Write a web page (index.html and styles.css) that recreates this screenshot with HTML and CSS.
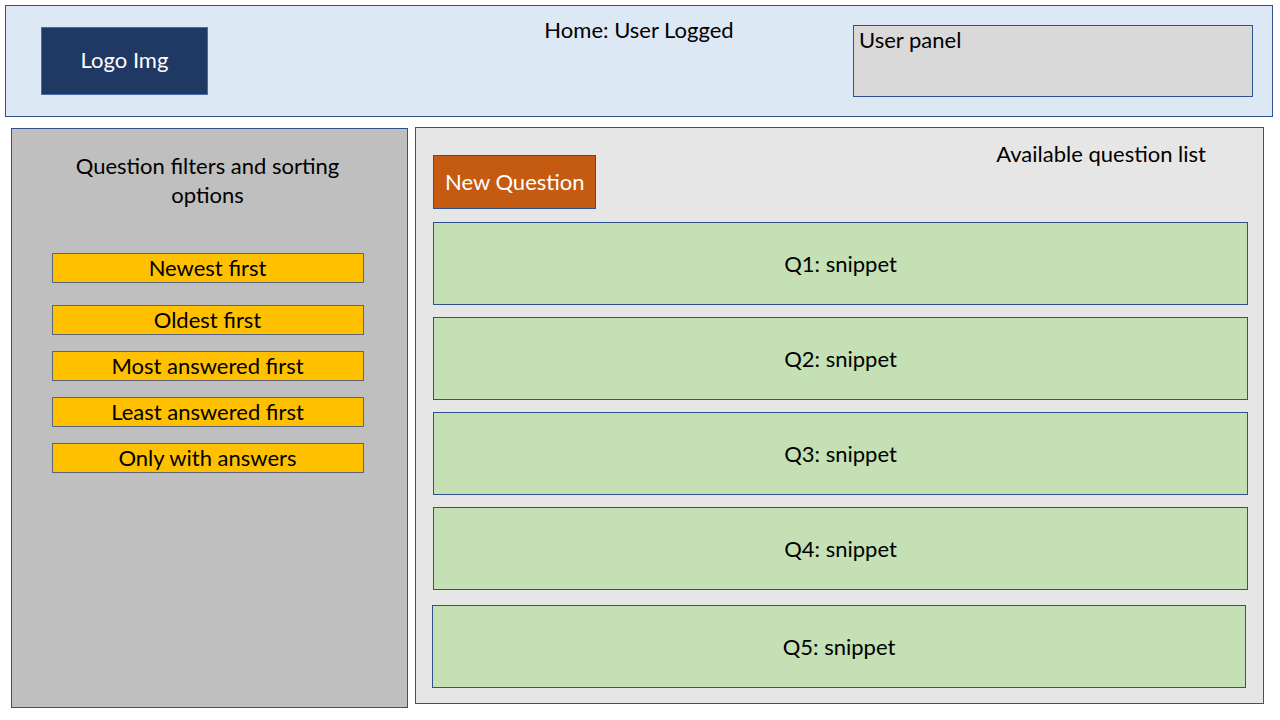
FILE: index.html
```html
<!DOCTYPE html>
<html>
<head>
<meta charset="utf-8">
<link rel="stylesheet" href="styles.css">
</head>
<body>
<header class="topbar">
  <div class="logo">Logo Img</div>
  <div class="page-title">Home: User Logged</div>
  <div class="user-panel">User panel</div>
</header>
<main class="content">
  <aside class="filters">
    <h2 class="filters-title">Question filters and sorting options</h2>
    <div class="filter-list">
      <div class="filter-btn first">Newest first</div>
      <div class="filter-btn">Oldest first</div>
      <div class="filter-btn">Most answered first</div>
      <div class="filter-btn">Least answered first</div>
      <div class="filter-btn">Only with answers</div>
    </div>
  </aside>
  <section class="questions">
    <div class="questions-head">
      <div class="new-question">New Question</div>
      <h2 class="questions-title">Available question list</h2>
    </div>
    <div class="question-list">
      <div class="question">Q1: snippet</div>
      <div class="question">Q2: snippet</div>
      <div class="question">Q3: snippet</div>
      <div class="question">Q4: snippet</div>
      <div class="question last">Q5: snippet</div>
    </div>
  </section>
</main>
</body>
</html>
```
FILE: styles.css
```css
* { box-sizing: border-box; }
html, body { margin: 0; padding: 0; }
body {
  width: 1280px;
  height: 720px;
  background: #ffffff;
  font-family: Lato, "Open Sans", "Liberation Sans", sans-serif;
  font-size: 22px;
  color: #000;
  overflow: hidden;
}
.topbar {
  margin: 5px 0 0 5px;
  width: 1268px;
  height: 112px;
  background: #dde8f5;
  border: 1px solid #2f528f;
  display: grid;
  grid-template-columns: 1fr auto 1fr;
  align-items: start;
  padding: 21px 18px 0 18px;
}
.logo {
  justify-self: start;
  margin-left: 17px;
  width: 167px;
  height: 68px;
  background: #203864;
  border: 1px solid #4a6da8;
  color: #fff;
  display: flex;
  align-items: center;
  justify-content: center;
  padding-bottom: 3px;
}
.page-title {
  margin-top: -10px;
  line-height: 26px;
}
.user-panel {
  justify-self: end;
  width: 400px;
  height: 72px;
  margin-top: -2px;
  margin-right: 1px;
  background: #d9d9d9;
  border: 1px solid #2f528f;
  padding: 1px 5px;
  line-height: 26px;
}
.content {
  display: flex;
  align-items: flex-start;
  gap: 7px;
  margin: 10px 0 0 11px;
}
.filters {
  margin-top: 1px;
  width: 397px;
  height: 580px;
  background: #bfbfbf;
  border: 1px solid #2f528f;
  padding: 22px 4px 0 0;
}
.filters-title {
  margin: 0 auto;
  width: 300px;
  font-size: 22px;
  font-weight: normal;
  text-align: center;
  line-height: 29px;
}
.filter-list {
  display: flex;
  flex-direction: column;
  align-items: center;
  gap: 16px;
  margin-top: 44px;
}
.filter-btn {
  width: 312px;
  height: 30px;
  background: #ffc000;
  border: 1px solid #5b6478;
  display: flex;
  align-items: center;
  justify-content: center;
  line-height: 26px;
}
.filter-btn.first { margin-bottom: 6px; }
.questions {
  width: 849px;
  height: 577px;
  background: #e7e6e6;
  border: 1px solid #2f528f;
  padding: 13px 15px 0 17px;
}
.questions-head {
  display: flex;
  justify-content: space-between;
  align-items: flex-start;
}
.new-question {
  margin-top: 14px;
  width: 163px;
  height: 54px;
  background: #c55a11;
  border: 1px solid #2f528f;
  color: #fff;
  display: flex;
  align-items: center;
  padding-left: 11px;
  padding-bottom: 2px;
}
.questions-title {
  margin: 0 42px 0 0;
  font-size: 22px;
  font-weight: normal;
  line-height: 26px;
}
.question-list {
  display: flex;
  flex-direction: column;
  gap: 12px;
  margin-top: 13px;
}
.question {
  width: 815px;
  height: 83px;
  background: #c5e0b4;
  border: 1px solid #2f528f;
  display: flex;
  align-items: center;
  justify-content: center;
}
.question.last { margin-top: 3px; margin-left: -1px; width: 814px; }
```
